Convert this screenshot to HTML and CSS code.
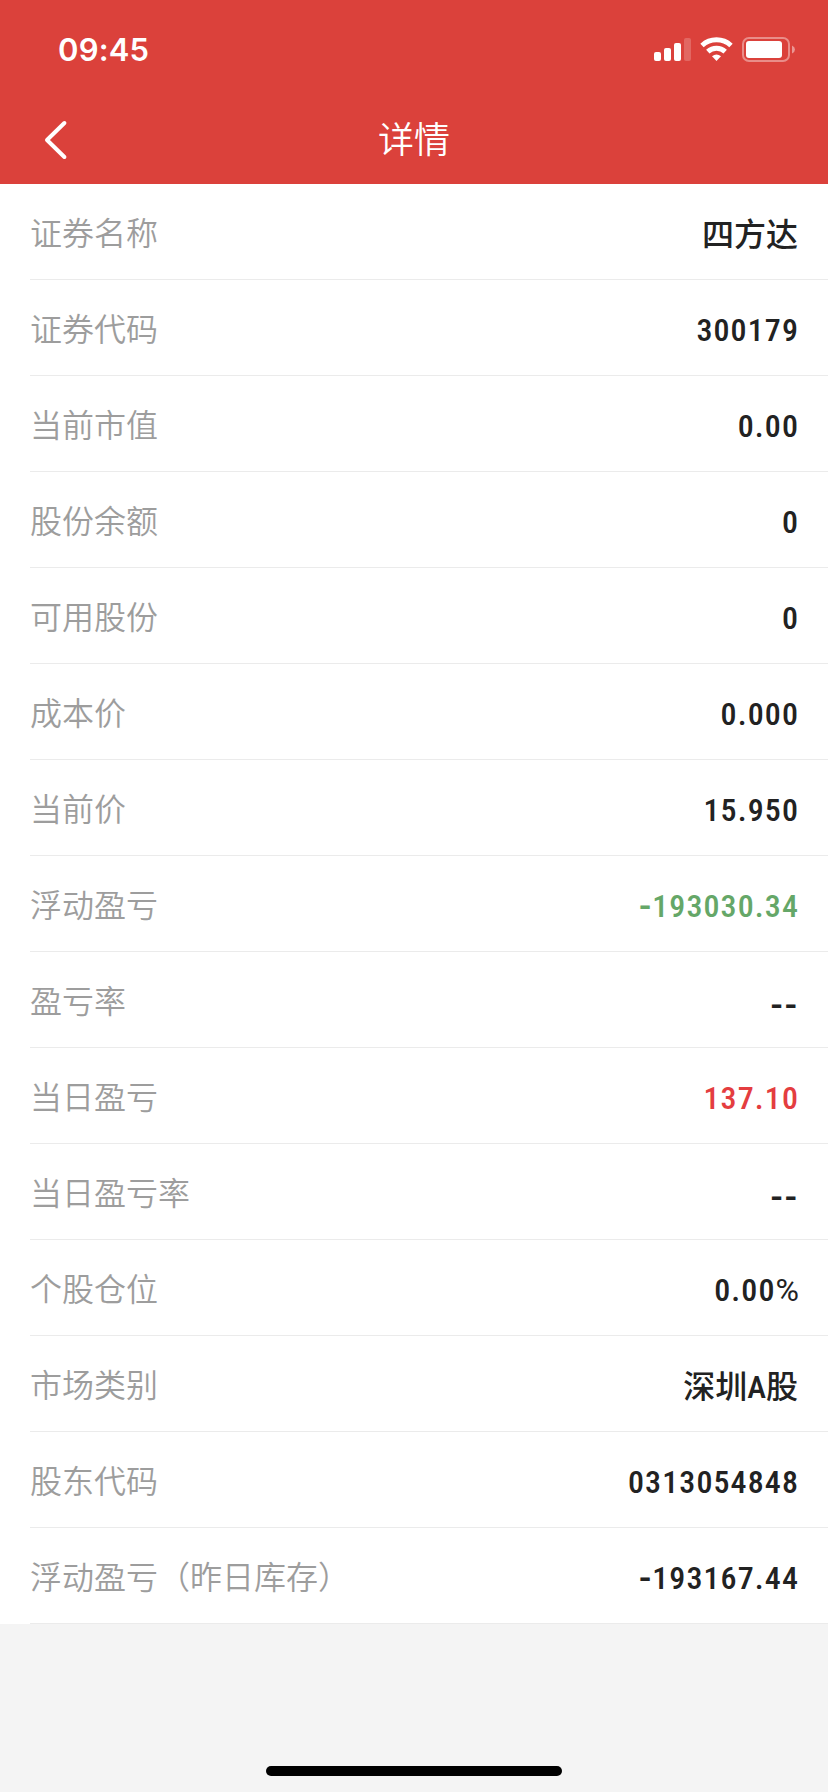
FILE: index.html
```
<!DOCTYPE html>
<html lang="zh-CN">
<head>
  <meta charset="UTF-8"/>
  <meta name="viewport" content="width=device-width, initial-scale=1.0"/>
  <title>详情</title>
  <link rel="stylesheet" href="styles.css">
</head>
<body>

  <!-- Header -->
  <header class="header">
    <div class="status-bar">
      <span class="time">09:45</span>
      <svg class="status-icons" width="142" height="26" viewBox="0 0 142 26">
        <g fill="#fff">
          <rect x="0" y="15" width="7" height="9" rx="2"/>
          <rect x="10" y="11" width="7" height="13" rx="2"/>
          <rect x="20" y="6" width="7" height="18" rx="2"/>
          <rect x="30" y="1" width="7" height="23" rx="2" opacity="0.2"/>
        </g>
        <!-- wifi -->
        <g fill="none" stroke="#fff" stroke-width="5">
          <path d="M48 8.5 A21.5 21.5 0 0 1 77 8.5"/>
          <path d="M53.8 14.6 A13 13 0 0 1 71.2 14.6"/>
        </g>
        <path d="M58 19.3 Q62.5 15.7 67 19.3 L62.5 24 Z" fill="#fff"/>
        <!-- battery -->
        <rect x="89" y="1" width="46" height="23" rx="6" fill="none" stroke="#fff" stroke-width="2" opacity="0.4"/>
        <rect x="92" y="4" width="36" height="17" rx="3" fill="#fff"/>
        <path d="M138 8.5 Q141 10 141 12.5 Q141 15 138 16.5 Z" fill="#fff" opacity="0.45"/>
      </svg>
    </div>
    <div class="nav-bar">
      <svg class="back" width="24" height="40" viewBox="0 0 24 40">
        <path d="M20.4 3 L3 20 L20.4 37" fill="none" stroke="#fff" stroke-width="4" stroke-linecap="round" stroke-linejoin="round"/>
      </svg>
      <h1 class="title">详情</h1>
    </div>
  </header>

  <!-- Detail rows -->
  <main class="list">
    <div class="row"><span class="label">证券名称</span><span class="value text">四方达</span></div>
    <div class="row"><span class="label">证券代码</span><span class="value">300179</span></div>
    <div class="row"><span class="label">当前市值</span><span class="value">0.00</span></div>
    <div class="row"><span class="label">股份余额</span><span class="value">0</span></div>
    <div class="row"><span class="label">可用股份</span><span class="value">0</span></div>
    <div class="row"><span class="label">成本价</span><span class="value">0.000</span></div>
    <div class="row"><span class="label">当前价</span><span class="value">15.950</span></div>
    <div class="row"><span class="label">浮动盈亏</span><span class="value down"><span class="minus">-</span>193030.34</span></div>
    <div class="row"><span class="label">盈亏率</span><span class="value empty">--</span></div>
    <div class="row"><span class="label">当日盈亏</span><span class="value up">137.10</span></div>
    <div class="row"><span class="label">当日盈亏率</span><span class="value empty">--</span></div>
    <div class="row"><span class="label">个股仓位</span><span class="value">0.00<span class="percent">%</span></span></div>
    <div class="row"><span class="label">市场类别</span><span class="value text">深圳A股</span></div>
    <div class="row"><span class="label">股东代码</span><span class="value">0313054848</span></div>
    <div class="row"><span class="label">浮动盈亏（昨日库存）</span><span class="value"><span class="minus">-</span>193167.44</span></div>
  </main>

  <footer class="footer">
    <div class="home-indicator"></div>
  </footer>

</body>
</html>
```
FILE: styles.css
```
* {
  box-sizing: border-box;
}

body {
  display: flex;
  flex-direction: column;
  min-height: 100vh;
  margin: 0;
  background-color: #f4f4f4;
  font-family: "Noto Sans CJK SC", sans-serif;
}

/* Header */
.header {
  height: 184px;
  background-color: #db413b;
  color: #fff;
}

.status-bar {
  display: flex;
  justify-content: space-between;
  height: 96px;
  padding: 30px 33px 0 58px;
}

.time {
  font-family: Inter, sans-serif;
  font-size: 31px;
  font-weight: 600;
  line-height: 40px;
  letter-spacing: 0.2px;
}

.status-icons {
  margin-top: 7px;
  margin-right: -1px;
}

.nav-bar {
  display: grid;
  grid-template-columns: 100px 1fr 100px;
  align-items: center;
  height: 88px;
}

.back {
  margin-left: 44px;
}

.title {
  margin: 0;
  font-size: 36px;
  font-weight: 350;
  line-height: 83px;
  height: 88px;
  text-align: center;
}

/* Rows */
.list {
  padding-left: 30px;
  background-color: #fff;
}

.row {
  display: flex;
  justify-content: space-between;
  height: 96px;
  padding-right: 30px;
  border-bottom: 1px solid #ebebeb;
  font-size: 32px;
  line-height: 94px;
}

.label {
  color: #9d9d9d;
  font-weight: 350;
}

.value {
  padding-top: 3px;
  margin-right: -1px;
  color: #222;
  font-family: Roboto, "Noto Sans CJK SC", sans-serif;
  font-weight: 500;
  font-stretch: 75%;
  letter-spacing: 1.1px;
}

.text {
  padding-top: 4px;
  margin-right: 0;
  letter-spacing: 0;
}

.minus {
  font-size: 36px;
  font-stretch: 100%;
  line-height: 1;
  letter-spacing: 1px;
  vertical-align: -2px;
}

.percent {
  font-weight: 400;
  font-stretch: 100%;
  letter-spacing: 0;
}

.empty {
  padding-top: 7px;
  margin-right: -1px;
  font-size: 36px;
  font-stretch: 100%;
  letter-spacing: 2px;
}

.down {
  color: #65a768;
}

.up {
  color: #e43d40;
}

/* Home indicator */
.footer {
  display: flex;
  flex: 1;
  justify-content: center;
  align-items: flex-end;
  padding-bottom: 16px;
}

.home-indicator {
  width: 296px;
  height: 10px;
  border-radius: 5px;
  background-color: #000;
}
```
